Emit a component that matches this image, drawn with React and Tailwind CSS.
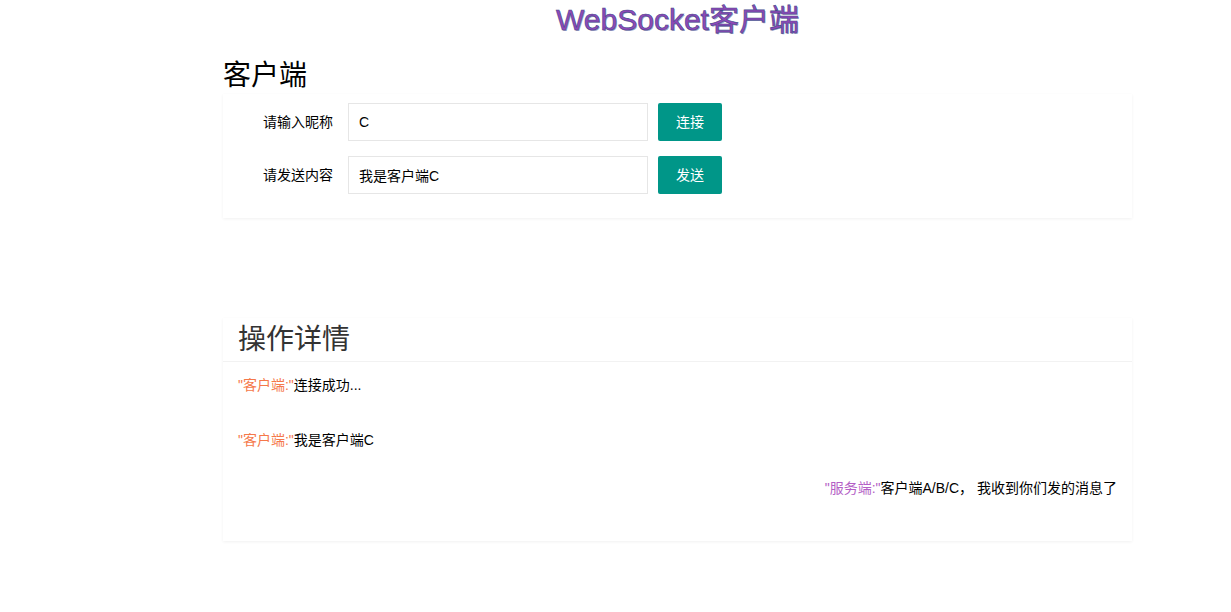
import React, { useState } from "react";

const font = { fontFamily: '"Liberation Sans", Arial, "Noto Sans CJK SC", sans-serif' };

const messages = [
  { from: "客户端", text: "连接成功...", side: "left" },
  { from: "客户端", text: "我是客户端C", side: "left" },
  { from: "服务端", text: "客户端A/B/C， 我收到你们发的消息了", side: "right" },
];

const FormRow = ({ label, value, btn }) => (
  <div className="flex items-center">
    <label className="w-[110px] text-right text-[14px] text-black">{label}</label>
    <input
      className="ml-[15px] h-[38px] w-[300px] border border-[#e6e6e6] px-[10px] text-[14px] text-black outline-none"
      defaultValue={value}
    />
    <button className="ml-[10px] h-[38px] w-[64px] rounded-[2px] bg-[#009688] text-[14px] text-white">
      {btn}
    </button>
  </div>
);

const App = () => {
  const [logs] = useState(messages);
  return (
    <div className="min-h-[612px] bg-white text-[#333]" style={font}>
      <div className="ml-[223px] w-[909px]">
        <h1
          className="pt-[3px] text-center text-[30px] leading-[34px] font-normal text-[#9048b8] [text-shadow:1px_1px_0_rgba(70,70,140,0.55)]"
          style={{ WebkitTextStroke: "0.6px #434a8c" }}
        >
          WebSocket客户端
        </h1>
        <h2 className="mt-[23px] text-[28px] leading-[32px] text-black">客户端</h2>
        <div className="mt-[2px] flex flex-col gap-[15px] bg-white pt-[9px] pb-[24px] shadow-[0_1px_3px_rgba(0,0,0,0.06)]">
          <FormRow label="请输入昵称" value="C" btn="连接" />
          <FormRow label="请发送内容" value="我是客户端C" btn="发送" />
        </div>

        <div className="mt-[100px] bg-white shadow-[0_1px_3px_rgba(0,0,0,0.06)]">
          <div className="border-b border-[#f2f2f2] px-[15px] pt-[6px] pb-[5px] text-[28px] leading-[32px] text-[#333]">
            操作详情
          </div>
          <div className="px-[15px] pt-[14px] pb-[44px] text-[14px] leading-[18px]">
            {logs.map((m, i) => (
              <div
                key={i}
                className={`${i === 0 ? "" : i === 1 ? "mt-[37px]" : "mt-[30px]"} ${
                  m.side === "right" ? "text-right" : "text-left"
                }`}
              >
                <span className={m.from === "服务端" ? "text-[#b45fc6]" : "text-[#f5784a]"}>
                  "{m.from}:"
                </span>
                <span className="text-black">{m.text}</span>
              </div>
            ))}
          </div>
        </div>
      </div>
    </div>
  );
};

export default App;
